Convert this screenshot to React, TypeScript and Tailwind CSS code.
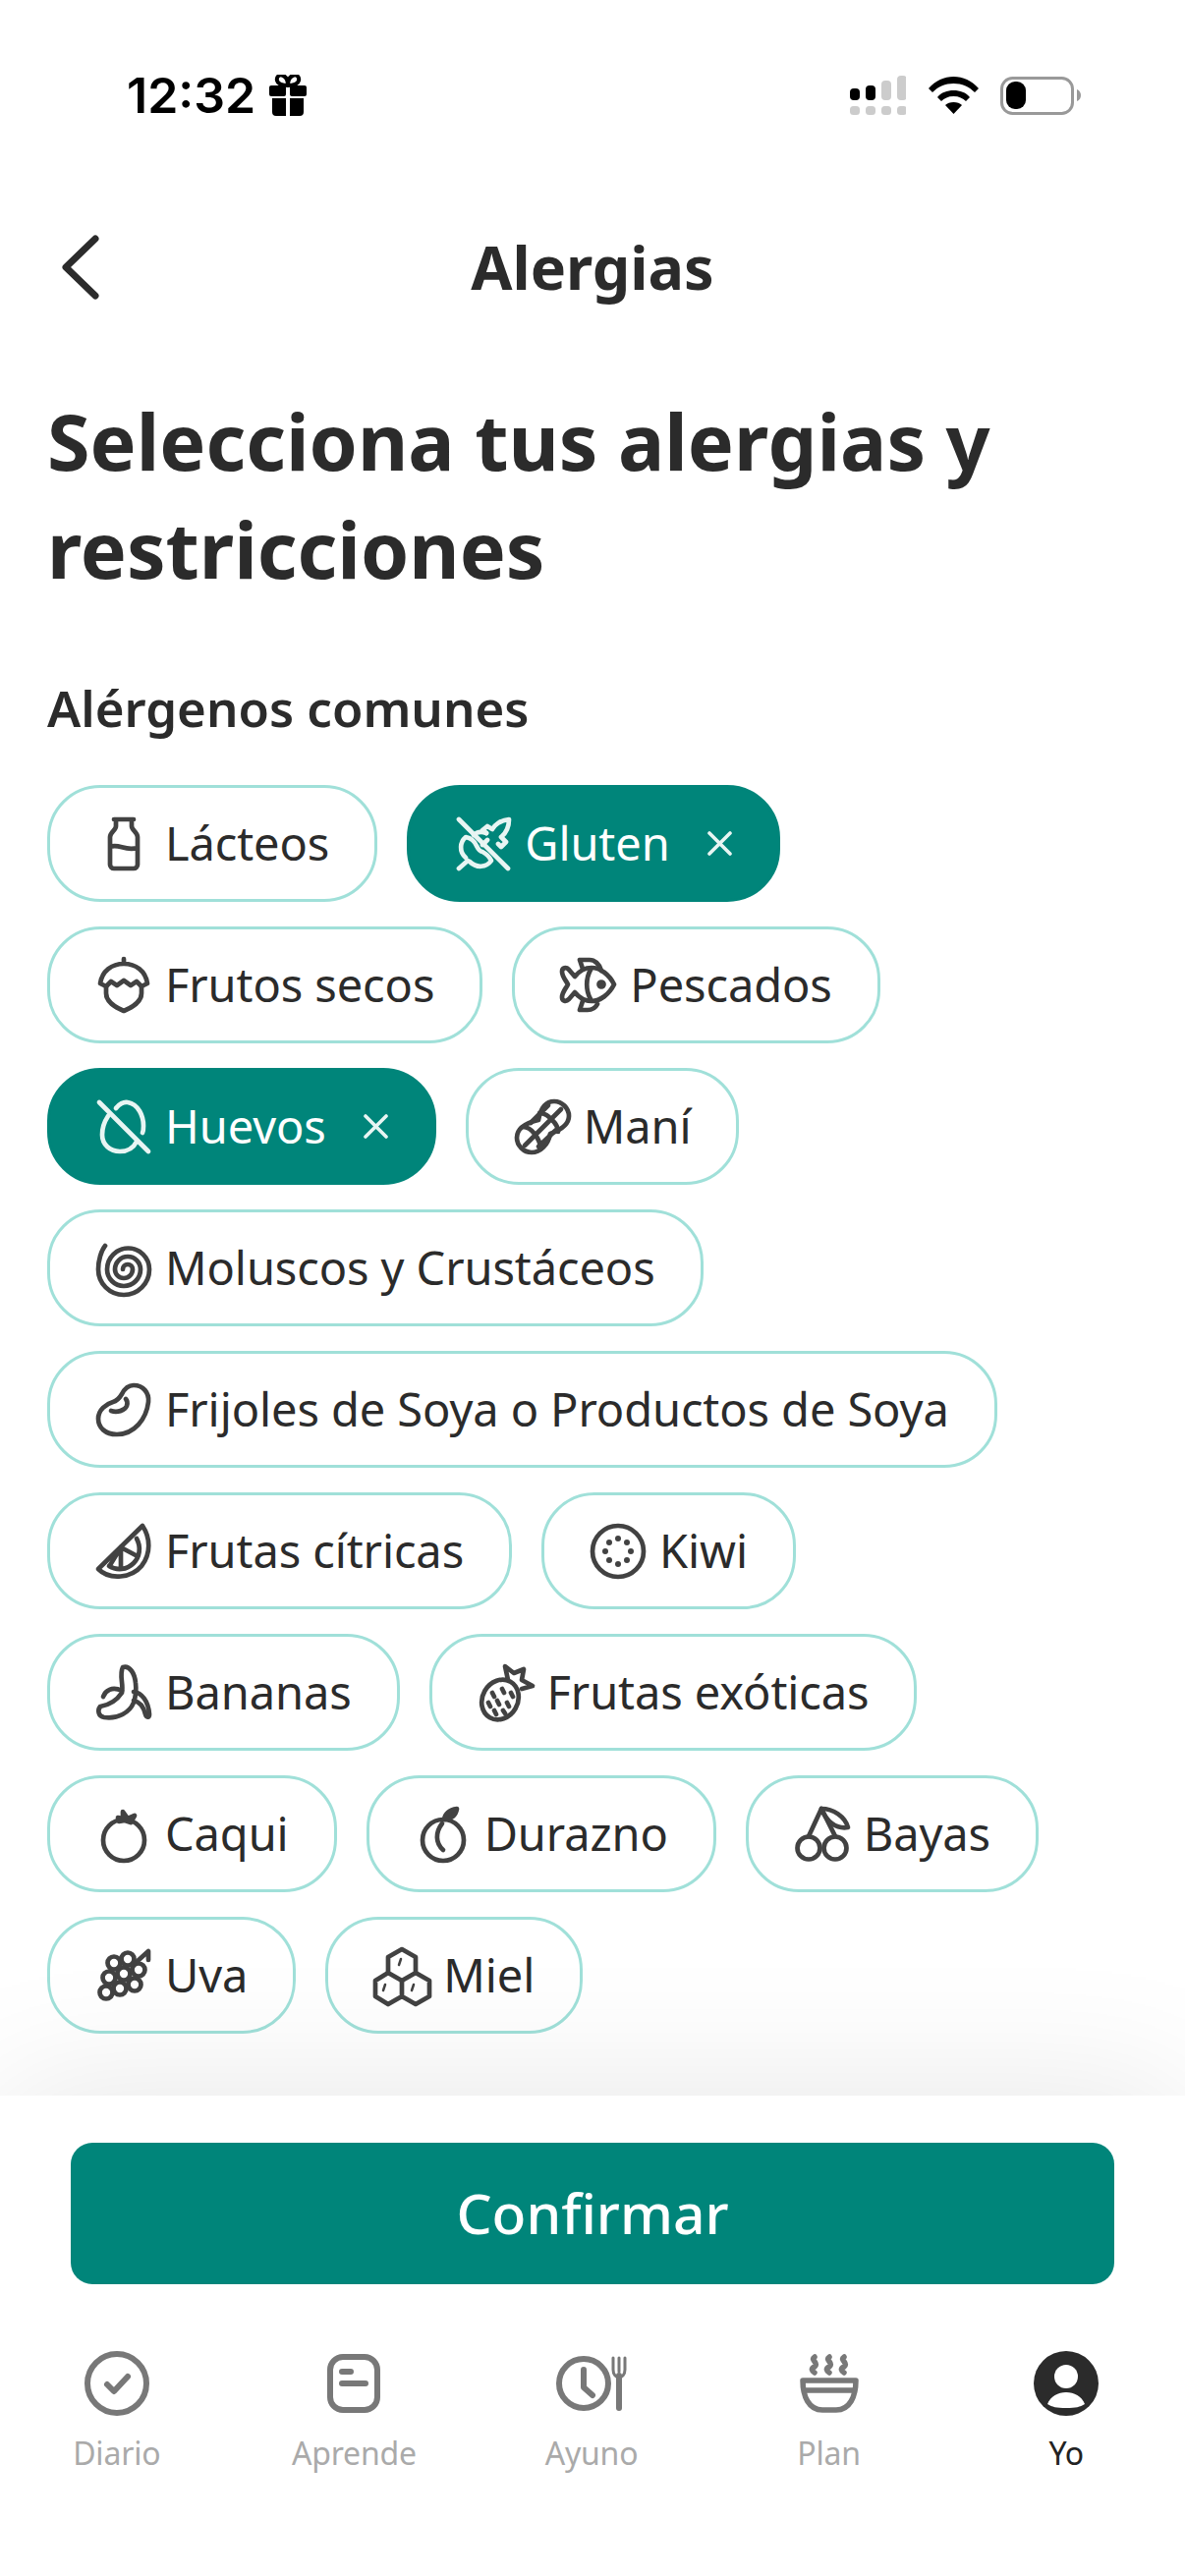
import React from "react"

const icons: Record<string, React.ReactNode> = {
  milk: (
    <path d="M18 3h20M20 3v7c0 4-6 6-6 11v28a4 4 0 0 0 4 4h20a4 4 0 0 0 4-4V21c0-5-6-7-6-11V3M14 31c9-4 15 5 28 1" />
  ),
  wheat: (
    <>
      <path d="M3 3l50 50M3 53l9-8" />
      <path d="M37 13c2-4 8-9 17-10 0 8-3 14-8 18M37 13l-5-3-5 4 4 3M46 21l5 5-5 5-3-3M32 24l-5 5" />
      <path d="M10 42C3 36 4 26 10 21c5 1 9 4 11 9M14 46c7 7 17 6 22-1-2-4-5-7-9-9M18 19c3-3 8-4 13-2M21 30c2 4 4 6 6 6" />
    </>
  ),
  nut: (
    <>
      <path d="M28 1v5M4 26C6 13 16 6 28 6s22 7 24 20l-6 3-5-5-6 4-7-5-7 5-6-4-5 5z" />
      <path d="M10 29v7c0 9 9 14 18 18 9-4 18-9 18-18v-7" />
    </>
  ),
  fish: (
    <>
      <path d="M54 27c-5-10-14-17-23-17-7 0-13 4-17 9l-6-7c-3-3-7-2-7 2 0 5 4 9 6 13-2 4-6 8-6 13 0 4 4 5 7 2l6-7c4 5 10 9 17 9 9 0 18-7 23-17z" />
      <path d="M22 11l-3-9h10c5 0 10 4 12 11M22 44l-3 9h8c4 0 8-2 10-6M30 12c-5 9-5 21 0 30" />
      <circle cx="41" cy="27" r="2.5" fill="currentColor" />
    </>
  ),
  egg: (
    <path d="M3 3l50 50M12 17c-4 6-6 13-6 19 0 10 8 17 18 17 8 0 14-4 17-10M20 9c3-4 8-7 12-6 11 2 16 14 16 24 0 2 0 5-1 7" />
  ),
  peanut: (
    <>
      <path d="M24 21C26 10 31 2 40 2c8 0 15 7 15 15 0 9-8 14-19 18C34 46 26 54 17 54 9 54 2 47 2 39c0-9 9-15 22-18z" />
      <path d="M10 47L47 10M8 28c6 0 9 3 12 7s6 8 6 14M25 14c6 0 9 3 13 7s6 7 6 12M16 24l18-18M24 48l18-17" />
    </>
  ),
  shell: (
    <path d="M9 5C5 10 2 20 2 29A26 26 0 0 0 54 29A21.500 21.500 0 0 0 11 29A17 17 0 0 0 45 29A13 13 0 0 0 19 29A9 9 0 0 0 37 29A5 5 0 0 0 27 29" />
  ),
  bean: (
    <>
      <path d="M38 3c10 0 16 8 15 17-2 17-14 33-32 33C9 53 2 46 2 37c0-9 8-15 15-17 4-1 6-3 9-8 3-6 7-9 12-9z" />
      <path d="M15 29c6 2 14 0 16-5 1-3 1-5-1-7" />
    </>
  ),
  citrus: (
    <>
      <path d="M47 2c8 12 9 28-1 41C36 55 14 58 2 46z" />
      <path d="M41 15c5 9 3 19-3 25-7 7-17 8-25 3M25 24l15 8M25 24v20M25 24L14 42" />
    </>
  ),
  kiwi: (
    <>
      <circle cx="28" cy="28" r="26" />
      <g fill="currentColor" stroke="none">
        <circle cx="28" cy="15" r="3" />
        <circle cx="37" cy="19" r="3" />
        <circle cx="41" cy="28" r="3" />
        <circle cx="37" cy="37" r="3" />
        <circle cx="28" cy="41" r="3" />
        <circle cx="19" cy="37" r="3" />
        <circle cx="15" cy="28" r="3" />
        <circle cx="19" cy="19" r="3" />
      </g>
    </>
  ),
  banana: (
    <>
      <path d="M27 2c7-2 12 6 13 16 1 8 0 14-2 20-4 10-16 17-30 15-6-1-7-7-4-11 12-2 18-8 22-14 2-9-3-18 1-26z" />
      <path d="M26 26C16 21 9 26 7 32M38 27c8 1 15 9 16 23 0 4-3 3-4 0-2-8-6-13-12-14" />
    </>
  ),
  exotic: (
    <>
      <ellipse cx="22" cy="35" rx="18" ry="21" transform="rotate(30 22 35)" />
      <path d="M30 15l-3-14 9 7 10-4-2 11 11 6-11 3" />
      <path d="M14 28l2 4M24 24l2 4M33 28l2 4M10 38l2 4M19 36l2 4M29 38l2 4M16 46l2 4M25 46l2 3" />
    </>
  ),
  persimmon: (
    <>
      <circle cx="28" cy="34" r="21" />
      <path d="M22 11l5 1 0-7 5 7 7-3-4 7-6-2-6 1z" fill="currentColor" />
    </>
  ),
  peach: (
    <>
      <circle cx="28" cy="34" r="21" />
      <path d="M29 13c1-6 6-10 13-11-1 6-5 10-13 11z" fill="currentColor" />
      <path d="M27 17c-7 9-7 20 1 27" />
    </>
  ),
  cherry: (
    <>
      <circle cx="14" cy="42" r="11.500" />
      <circle cx="41" cy="42" r="11.500" />
      <path d="M14 30L27 2l14 28" />
      <path d="M27 2c12 0 24 8 27 19-12 2-22-6-27-19z" />
    </>
  ),
  grape: (
    <>
      <circle cx="10" cy="45" r="6.500" />
      <circle cx="24" cy="41" r="6.500" />
      <circle cx="39" cy="37" r="6.500" />
      <circle cx="13" cy="30" r="6.500" />
      <circle cx="28" cy="26" r="6.500" />
      <circle cx="43" cy="22" r="6.500" />
      <circle cx="18" cy="15" r="6.500" />
      <circle cx="32" cy="11" r="6.500" />
      <path d="M42 13l11-10v9" />
    </>
  ),
  honey: (
    <>
      <path d="M28 1l14 8v16l-14 8-14-8V9z" />
      <path d="M14 25L1 33v16l13 8 14-8 14 8 14-8V33l-14-8M28 33v16" />
      <path d="M27 11l-2 6M11 37l-2 6M40 37l-2 6" strokeWidth="2.500" />
    </>
  ),
}

type Allergen = { label: string; icon: string; selected?: boolean }

const allergens: Allergen[] = [
  { label: "Lácteos", icon: "milk" },
  { label: "Gluten", icon: "wheat", selected: true },
  { label: "Frutos secos", icon: "nut" },
  { label: "Pescados", icon: "fish" },
  { label: "Huevos", icon: "egg", selected: true },
  { label: "Maní", icon: "peanut" },
  { label: "Moluscos y Crustáceos", icon: "shell" },
  { label: "Frijoles de Soya o Productos de Soya", icon: "bean" },
  { label: "Frutas cítricas", icon: "citrus" },
  { label: "Kiwi", icon: "kiwi" },
  { label: "Bananas", icon: "banana" },
  { label: "Frutas exóticas", icon: "exotic" },
  { label: "Caqui", icon: "persimmon" },
  { label: "Durazno", icon: "peach" },
  { label: "Bayas", icon: "cherry" },
  { label: "Uva", icon: "grape" },
  { label: "Miel", icon: "honey" },
]

function Chip({ item }: { item: Allergen }) {
  const tone = item.selected
    ? "bg-[#00857a] border-[#00857a] text-white"
    : "bg-transparent border-[#a0e0d9] text-[#2b2b2b]"
  return (
    <div className={`h-[119px] flex items-center pl-[47px] pr-[46px] border-[3px] rounded-[54px] ${tone}`}>
      <svg
        viewBox="0 0 56 56"
        className={`w-[56px] h-[56px] shrink-0 overflow-visible ${item.selected ? "text-[#e8f5f3]" : "text-[#424242]"}`}
        fill="none"
        stroke="currentColor"
        strokeWidth="4.700"
        strokeLinecap="round"
        strokeLinejoin="round"
      >
        {icons[item.icon]}
      </svg>
      <span className="ml-[14px] text-[47px] leading-none tracking-[-0.1px]">{item.label}</span>
      {item.selected && (
        <svg viewBox="0 0 25 25" className="ml-[38px] w-[25px] h-[25px]" fill="none" stroke="#e8f5f3" strokeWidth="3.600" strokeLinecap="round">
          <path d="M2 2l21 21M23 2L2 23" />
        </svg>
      )}
    </div>
  )
}

function StatusBar() {
  return (
    <div className="h-[160px] flex justify-between pt-[76px] pl-[129px] pr-[106px]">
      <div className="flex items-start">
        <span className="text-[50px] leading-[42px] font-semibold text-black font-['Inter',_sans-serif]">12:32</span>
        {/* gift */}
        <svg viewBox="0 0 38 42" className="ml-[14px] w-[38px] h-[42px]" fill="#000">
          <path d="M19 11C14 11 9 10 8 6c-1-4 3-7 6-5 3 1 5 5 5 10zm0 0c5 0 10-1 11-5 1-4-3-7-6-5-3 1-5 5-5 10z" fill="none" stroke="#000" strokeWidth="4" />
          <rect x="0" y="11" width="17" height="11" rx="2" />
          <rect x="21" y="11" width="17" height="11" rx="2" />
          <path d="M3 24h14v18H7a4 4 0 0 1-4-4zM21 24h14v14a4 4 0 0 1-4 4H21z" />
        </svg>
      </div>
      <div className="flex items-start">
        <svg viewBox="0 0 57 40" className="w-[57px] h-[40px] mt-[1px]">
          <rect x="0" y="13" width="10" height="12" rx="4" fill="#000" />
          <rect x="16" y="10" width="10" height="15" rx="4" fill="#000" />
          <rect x="32" y="5" width="10" height="20" rx="4" fill="#ccc" />
          <rect x="48" y="0" width="10" height="25" rx="4" fill="#ccc" />
          <rect x="0" y="31" width="10" height="9" rx="3.500" fill="#ccc" />
          <rect x="16" y="31" width="10" height="9" rx="3.500" fill="#ccc" />
          <rect x="32" y="31" width="10" height="9" rx="3.500" fill="#ccc" />
          <rect x="48" y="31" width="10" height="9" rx="3.500" fill="#ccc" />
        </svg>
        <svg viewBox="0 0 51 38" className="ml-[23px] w-[51px] h-[38px] mt-[2px]">
          <path d="M0 12C7 4 16 0 25.500 0S44 4 51 12l-4 4C41 10 34 7 25.500 7S10 10 4 16z" />
          <path d="M9 21c4-5 10-7 16.500-7S38 16 42 21l-4 4c-3-3-7-5-12.500-5S16 22 13 25z" />
          <path d="M17 29c2-2 5-3 8.500-3s6.500 1 8.500 3l-8.500 9z" />
        </svg>
        <svg viewBox="0 0 82 39" className="ml-[22px] w-[82px] h-[39px] mt-[2px]">
          <rect x="1.500" y="1.500" width="72" height="36" rx="11" fill="none" stroke="#999" strokeWidth="3" />
          <rect x="6" y="5" width="20" height="28" rx="9" fill="#000" />
          <path d="M78 13c3 1 4 4 4 6s-1 5-4 6z" fill="#999" />
        </svg>
      </div>
    </div>
  )
}

function NavItem({ label, active, children }: { label: string; active?: boolean; children: React.ReactNode }) {
  return (
    <div className="flex flex-col items-center">
      <div className="h-[66px] flex items-center justify-center">{children}</div>
      <span className={`mt-[18px] text-[32px] leading-[40px] tracking-[-0.2px] ${active ? "text-[#222]" : "text-[#aaa]"}`}>{label}</span>
    </div>
  )
}

export default function App() {
  return (
    <div className="w-[1206px] h-[2622px] flex flex-col bg-white overflow-hidden font-['Noto_Sans',_sans-serif] text-[#2b2b2b]">
      <div className="flex-1 min-h-0 overflow-hidden">
        <StatusBar />

        {/* Header */}
        <div className="h-[226px] grid grid-cols-[1fr_auto_1fr] items-start pt-[79px] pl-[61px]">
          <svg viewBox="0 0 40 66" className="w-[40px] h-[66px]" fill="none" stroke="#2b2b2b" strokeWidth="7" strokeLinecap="round" strokeLinejoin="round">
            <path d="M36 4L6 33l30 29" />
          </svg>
          <h2 className="-ml-[61px] text-[61px] leading-[66px] font-bold">Alergias</h2>
        </div>

        <div className="px-[48px]">
          <h1 className="mt-[8px] text-[79px] leading-[110px] font-bold">Selecciona tus alergias y restricciones</h1>
          <h3 className="mt-[79px] text-[51px] leading-[54px] font-semibold">Alérgenos comunes</h3>
          <div className="mt-[52px] flex flex-wrap gap-x-[30px] gap-y-[25px]">
            {allergens.map((item) => (
              <Chip key={item.label} item={item} />
            ))}
          </div>
        </div>
      </div>

      {/* Footer */}
      <div className="relative z-10 h-[489px] bg-white shadow-[0_0_140px_rgba(0,0,0,0.1)] pt-[48px]">
        <div className="mx-[72px] h-[144px] rounded-[22px] bg-[#00857a] flex items-center justify-center text-white text-[57px] font-medium">
          Confirmar
        </div>
        <div className="mt-[68px] w-[1208px] -ml-[2px] grid grid-cols-5">
          <NavItem label="Diario">
            <svg viewBox="0 0 66 66" className="w-[66px] h-[66px]" fill="none" stroke="#787878" strokeWidth="6" strokeLinecap="round" strokeLinejoin="round">
              <circle cx="33" cy="33" r="30" />
              <path d="M23 34l7 7 14-15" />
            </svg>
          </NavItem>
          <NavItem label="Aprende">
            <svg viewBox="0 0 54 60" className="w-[54px] h-[60px]" fill="none" stroke="#787878" strokeWidth="6" strokeLinecap="round">
              <rect x="3" y="3" width="48" height="54" rx="13" />
              <path d="M15 18h9M15 30h24" />
            </svg>
          </NavItem>
          <NavItem label="Ayuno">
            <svg viewBox="0 0 72 56" className="w-[72px] h-[56px]" fill="none" stroke="#787878" strokeWidth="6" strokeLinecap="round" strokeLinejoin="round">
              <circle cx="28" cy="28" r="25" />
              <path d="M28 14v18l9 8" />
              <path d="M58 2v12c0 5 3 8 6 8s6-3 6-8V2M64 2v14" strokeWidth="3" />
              <path d="M64 20v33" />
            </svg>
          </NavItem>
          <NavItem label="Plan">
            <svg viewBox="0 0 60 60" className="w-[60px] h-[60px]" fill="none" stroke="#787878" strokeWidth="5.500" strokeLinecap="round" strokeLinejoin="round">
              <path d="M15 3c-5 3 5 6 0 10-4 2-3 4 0 6M30 3c-5 3 5 6 0 10-4 2-3 4 0 6M45 3c-5 3 5 6 0 10-4 2-3 4 0 6" />
              <path d="M3 27h54c0 16-6 30-20 30H23C9 57 3 43 3 27zM4 37h52" />
            </svg>
          </NavItem>
          <NavItem label="Yo" active>
            <svg viewBox="0 0 66 66" className="w-[66px] h-[66px]">
              <circle cx="33" cy="33" r="33" fill="#2b2b2b" />
              <circle cx="33" cy="26" r="12" fill="#fff" />
              <path d="M14 54c3-8 11-12 19-12s16 4 19 12c-5 3-9 4-19 4s-14-1-19-4z" fill="#fff" />
            </svg>
          </NavItem>
        </div>
      </div>
    </div>
  )
}
